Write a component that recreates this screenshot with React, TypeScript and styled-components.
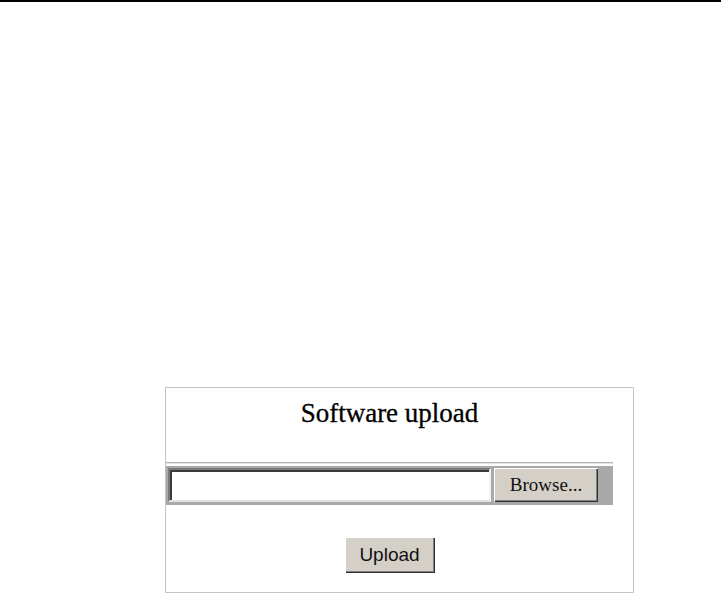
import React from "react";
import styled, { createGlobalStyle } from "styled-components";

const Global = createGlobalStyle`
  html, body { margin: 0; padding: 0; background: #ffffff; }
  body { font-family: "Liberation Serif", "Times New Roman", serif; }
`;

const Page = styled.div`
  width: 721px;
  height: 593px;
  display: flex;
  flex-direction: column;
  overflow: hidden;
`;

const TopRule = styled.div`
  height: 2px;
  background: #000000;
  flex: none;
`;

const Panel = styled.div`
  margin: 385px 0 0 165px;
  width: 469px;
  height: 206px;
  border: 1px solid #c4c4c4;
  box-sizing: border-box;
  display: flex;
  flex-direction: column;
`;

const Content = styled.div`
  width: 447px;
  display: flex;
  flex-direction: column;
  align-items: center;
`;

const Title = styled.h1`
  margin: 10px 0 0;
  font-family: "Liberation Serif", "Times New Roman", serif;
  font-weight: normal;
  font-size: 27px;
  line-height: 31px;
  color: #000000;
  -webkit-text-stroke: 0.3px #000000;
`;

const Divider = styled.div`
  align-self: stretch;
  margin-top: 33px;
  height: 2px;
  border-top: 1px solid #b4b4b4;
  border-bottom: 1px solid #e4e4e4;
  box-sizing: border-box;
`;

const FileRow = styled.div`
  align-self: stretch;
  margin-top: 2px;
  height: 39px;
  box-sizing: border-box;
  background: #a9a9a9;
  padding: 2px 15px 3px 2px;
  display: flex;
  align-items: stretch;
  gap: 3px;
`;

const PathField = styled.div`
  flex: 1;
  background: #ffffff;
  border-top: 2px solid #7a7a7a;
  border-left: 2px solid #7a7a7a;
  border-bottom: 2px solid #e0e0e0;
  border-right: 2px solid #f4f4f4;
  box-shadow: inset 2px 2px 0 #3c3c3c;
`;

const Button = styled.button<{ $font: "serif" | "sans" }>`
  background: #d4d0c8;
  border: none;
  box-shadow: inset 1px 1px 0 #ffffff, inset -1px -1px 0 #303030, inset -2px -2px 0 #808080;
  padding: 0;
  color: #111111;
  font-family: ${(p) =>
    p.$font === "serif"
      ? `"Liberation Serif", "Times New Roman", serif`
      : `"Liberation Sans", Arial, sans-serif`};
  cursor: default;
`;

const BrowseButton = styled(Button)`
  width: 104px;
  height: 34px;
  font-size: 19px;
`;

const UploadButton = styled(Button)`
  margin-top: 32px;
  width: 90px;
  height: 36px;
  font-size: 19px;
`;

export default function App() {
  return (
    <>
      <Global />
      <Page>
        <TopRule />
        <Panel>
          <Content>
            <Title>Software upload</Title>
            <Divider />
            <FileRow>
              <PathField />
              <BrowseButton $font="serif">Browse...</BrowseButton>
            </FileRow>
            <UploadButton $font="sans">Upload</UploadButton>
          </Content>
        </Panel>
      </Page>
    </>
  );
}
